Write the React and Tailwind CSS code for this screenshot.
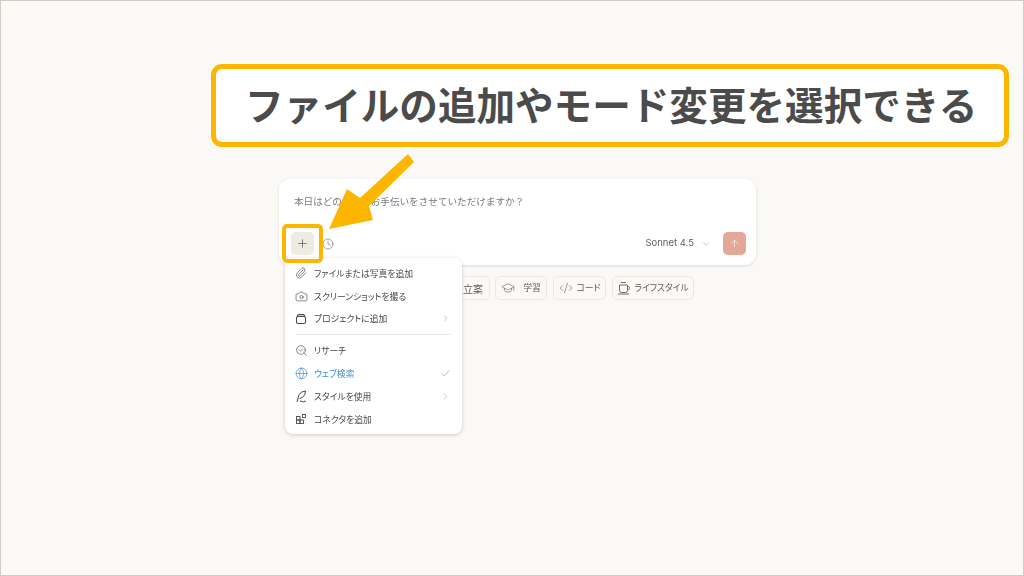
import { Paperclip, Camera, ChevronRight, ChevronDown, SearchCheck, Globe, Check, Plus, Clock, ArrowUp, GraduationCap, CodeXml } from 'lucide-react';

function ProjectIcon() {
  return (
    <svg width="12" height="12" viewBox="0 0 12 12" fill="none" stroke="currentColor" strokeWidth="1.1">
      <rect x="1.5" y="3.5" width="9" height="7" rx="1.5" />
      <path d="M2.5 3.5V2.8a1.2 1.2 0 0 1 1.2-1.2h4.6a1.2 1.2 0 0 1 1.2 1.2v.7" />
    </svg>
  );
}

function ConnectorIcon() {
  return (
    <svg width="12" height="12" viewBox="0 0 12 12" fill="none" stroke="currentColor" strokeWidth="0.9">
      <rect x="1.5" y="3.5" width="3.5" height="3.5" />
      <rect x="1.5" y="7" width="3.5" height="3.5" />
      <rect x="5" y="7" width="3.5" height="3.5" />
      <rect x="7.5" y="1.5" width="3" height="3" />
    </svg>
  );
}

function StyleIcon() {
  return (
    <svg width="13" height="13" viewBox="0 0 13 13" fill="none" stroke="currentColor" strokeWidth="1">
      <path d="M2 12 4 4.5Q6 1.5 10.5 1 10.5 5 7.5 7.5L4.5 8.5" />
      <path d="M5 11.5q1-1 2 0t2 0 2 0" />
    </svg>
  );
}

function CupIcon() {
  return (
    <svg width="14" height="14" viewBox="0 0 14 14" fill="none" stroke="currentColor" strokeWidth="0.9">
      <path d="M4 1.5h5" />
      <path d="M2.5 4h8v5.5a2 2 0 0 1-2 2h-4a2 2 0 0 1-2-2z" />
      <path d="M10.5 5.5h1a1 1 0 0 1 1 1v1a1 1 0 0 1-1 1h-1" />
      <path d="M1 13h11" />
    </svg>
  );
}

function MenuRow({ icon, label, blue, right }) {
  return (
    <div className={`flex items-center h-[22.8px] pl-[10px] pr-[11px] ${blue ? 'text-[#3f8fdc]' : 'text-[#4a4843]'}`}>
      <span className="w-[19px] flex justify-start">{icon}</span>
      <span className="flex-1 text-[8.8px] [font-feature-settings:'palt']">{label}</span>
      {right}
    </div>
  );
}

function Chip({ icon, label, className }) {
  return (
    <div className={`flex items-center justify-center h-[24px] rounded-[5px] border border-[#ebe9e2] text-[#5f5d56] text-[8.8px] [font-feature-settings:'palt'] ${className}`}>
      {icon}
      <span>{label}</span>
    </div>
  );
}

export default function App() {
  return (
    <div
      className="relative w-[1024px] h-[576px] overflow-hidden bg-[#faf9f5] border border-[#cfcdc6] flex flex-col"
      style={{ fontFamily: '"Noto Sans CJK JP", "Noto Sans", sans-serif' }}
    >
      {/* Callout */}
      <div className="mt-[63px] ml-[210px] w-[798px] h-[83px] rounded-[11px] border-[5px] border-[#fdb600] bg-white flex items-center pl-[29px] pb-[4px]">
        <span className="text-[38.6px] font-bold text-[#4b4b4b] whitespace-nowrap leading-none">ファイルの追加やモード変更を選択できる</span>
      </div>

      {/* Chat box */}
      <div className="relative blur-[0.4px]">
        <div className="mt-[32px] ml-[278px] w-[477px] h-[86px] rounded-[11px] bg-white shadow-[0_1px_3px_rgba(0,0,0,0.12)] flex flex-col justify-between pt-[15px] pb-[10px] pl-[15px] pr-[10px]">
          <div className="text-[9.6px] text-[#7b7972]">本日はどのようなお手伝いをさせていただけますか？</div>
          <div className="flex items-center -ml-[3px]">
            <div className="w-[23px] h-[23px] rounded-[5px] bg-[#eeebe3] flex items-center justify-center text-[#4a4843]">
              <Plus size={13} strokeWidth={1.2} />
            </div>
            <Clock size={12} strokeWidth={1.1} className="ml-[8px] text-[#5f5d56]" />
            <div className="flex-1" />
            <span className="text-[9.5px] text-[#5f5d56]" style={{ fontFamily: 'Inter, sans-serif' }}>Sonnet 4.5</span>
            <ChevronDown size={10} strokeWidth={1} className="ml-[7px] text-[#77756e]" />
            <div className="ml-[12px] w-[23px] h-[23px] rounded-[5px] bg-[#e3a897] flex items-center justify-center text-white">
              <ArrowUp size={11} strokeWidth={1.3} />
            </div>
          </div>
        </div>

        {/* Suggestion chips */}
        <div className="mt-[11px] ml-[419px] flex gap-[5px]">
          <Chip label="立案" className="w-[70px] justify-end pr-[6px] text-[10px]" />
          <Chip icon={<GraduationCap size={14} strokeWidth={1} className="mr-[8px]" />} label="学習" className="w-[52px]" />
          <Chip icon={<CodeXml size={14} strokeWidth={1} className="mr-[4px]" />} label="コード" className="w-[53px] ml-[1px]" />
          <Chip icon={<CupIcon />} label="ライフスタイル" className="w-[82px] ml-[1px] gap-[3px]" />
        </div>

        {/* Add menu */}
        <div className="absolute left-[284px] top-[111px] w-[177px] h-[176px] rounded-[8px] bg-white shadow-[0_1px_4px_rgba(0,0,0,0.18)] pt-[4px]">
          <MenuRow icon={<Paperclip size={12} strokeWidth={1.3} />} label="ファイルまたは写真を追加" />
          <MenuRow icon={<Camera size={13} strokeWidth={1.2} />} label="スクリーンショットを撮る" />
          <MenuRow icon={<ProjectIcon />} label="プロジェクトに追加" right={<ChevronRight size={11} strokeWidth={1} className="text-[#8d8b84]" />} />
          <div className="ml-[11px] mr-[11px] my-[4px] border-t border-[#ebe9e2]" />
          <MenuRow icon={<SearchCheck size={13} strokeWidth={1.2} />} label="リサーチ" />
          <MenuRow icon={<Globe size={13} strokeWidth={1.3} />} label="ウェブ検索" blue right={<Check size={11} strokeWidth={1.1} />} />
          <MenuRow icon={<StyleIcon />} label="スタイルを使用" right={<ChevronRight size={11} strokeWidth={1} className="text-[#8d8b84]" />} />
          <MenuRow icon={<ConnectorIcon />} label="コネクタを追加" />
        </div>
      </div>

      {/* Annotations over the UI */}
      <div className="absolute left-[281px] top-[223px] w-[41px] h-[39px] rounded-[5px] border-[4px] border-[#fdb600]" />
      <svg className="absolute left-0 top-0" width="1024" height="576">
        <polygon points="407,153 413,161 368,205 372,219 328,228 346,188 359,197" fill="#fdb600" />
      </svg>
    </div>
  );
}
